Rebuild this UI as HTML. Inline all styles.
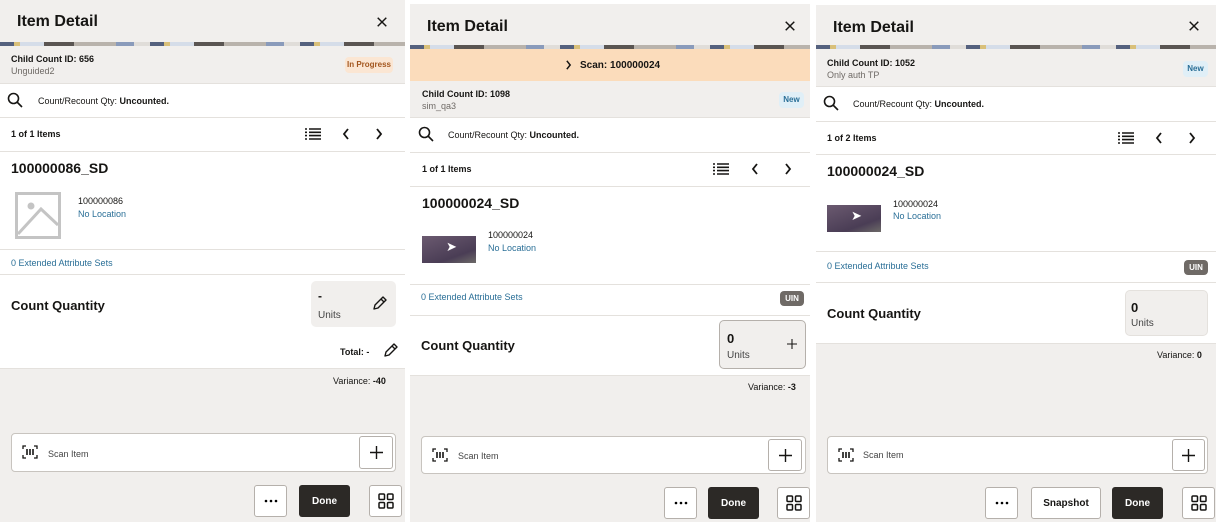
<!DOCTYPE html>
<html><head><meta charset="utf-8"><style>
*{margin:0;padding:0;box-sizing:border-box}
body{width:1216px;height:525px;background:#fff;font-family:"Liberation Sans",sans-serif;color:#161513;position:relative;overflow:hidden}
.p{position:absolute;top:0;height:522px;background:#fff;overflow:hidden}
.a{position:absolute}
.hd{background:#f1efed;left:0;right:0}
.title{font-size:16px;font-weight:bold}
.stripe{left:0;right:0;height:4px;background:repeating-linear-gradient(90deg,#55617e 0 14px,#d9c07a 14px 20px,#d5dde9 20px 44px,#5a5552 44px 74px,#b9b3ac 74px 116px,#8a9bbb 116px 134px,#e0ddd9 134px 150px)}
.sm{font-size:9px}
.b{font-weight:bold}
.sub{font-size:9px;color:#6f6a66}
.bdr{left:0;right:0;height:1px;background:#e4e1dd}
.badge{font-size:8px;font-weight:bold;border-radius:4px;text-align:center;line-height:16px}
.link{color:#2a6f97;font-size:9px}
.qbox{background:#f1efed;border-radius:5px}
.btn{border:1px solid #b5b0ab;border-radius:3px;background:#fff;text-align:center;font-size:10px;font-weight:bold;display:flex;align-items:center;justify-content:center}
.done{background:#2c2926;color:#fff;border-radius:3px;font-size:10px;font-weight:bold;display:flex;align-items:center;justify-content:center}
.scan{background:#fff;border:1px solid #c8c4bf;border-radius:4px}
.thumb{background:linear-gradient(160deg,#6b5a70,#4a3d55 70%,#6d6a68)}
</style></head><body>
<svg width="0" height="0" style="position:absolute">
<defs>
<symbol id="x" viewBox="0 0 14 14"><path d="M2 2l10 10M12 2L2 12" stroke="#161513" stroke-width="1.7"/></symbol>
<symbol id="srch" viewBox="0 0 16 16"><circle cx="6.5" cy="6.5" r="5" fill="none" stroke="#161513" stroke-width="1.6"/><path d="M10 10l5 5" stroke="#161513" stroke-width="1.6"/></symbol>
<symbol id="list" viewBox="0 0 16 12"><path d="M0 1h2M0 4.3h2M0 7.6h2M0 11h2M4 1h12M4 4.3h12M4 7.6h12M4 11h12" stroke="#161513" stroke-width="1.6"/></symbol>
<symbol id="lt" viewBox="0 0 8 12"><path d="M6 1L2 6l4 5" fill="none" stroke="#161513" stroke-width="1.8"/></symbol>
<symbol id="rt" viewBox="0 0 8 12"><path d="M2 1l4 5-4 5" fill="none" stroke="#161513" stroke-width="1.8"/></symbol>
<symbol id="pen" viewBox="0 0 16 16"><path d="M3 13l1-4 8-8 3 3-8 8z M10 3l3 3" fill="none" stroke="#161513" stroke-width="1.4" stroke-linejoin="round"/></symbol>
<symbol id="grid" viewBox="0 0 16 16"><rect x="1" y="1" width="5.5" height="5.5" rx="1" fill="none" stroke="#161513" stroke-width="1.5"/><rect x="9.5" y="1" width="5.5" height="5.5" rx="1" fill="none" stroke="#161513" stroke-width="1.5"/><rect x="1" y="9.5" width="5.5" height="5.5" rx="1" fill="none" stroke="#161513" stroke-width="1.5"/><rect x="9.5" y="9.5" width="5.5" height="5.5" rx="1" fill="none" stroke="#161513" stroke-width="1.5"/></symbol>
<symbol id="dots" viewBox="0 0 14 4"><circle cx="2" cy="2" r="1.3"/><circle cx="7" cy="2" r="1.3"/><circle cx="12" cy="2" r="1.3"/></symbol>
<symbol id="plus" viewBox="0 0 14 14"><path d="M7 0v14M0 7h14" stroke="#161513" stroke-width="1.5"/></symbol>
<symbol id="bc" viewBox="0 0 16 14"><path d="M1 4V1h3M12 1h3v3M15 10v3h-3M4 13H1v-3" fill="none" stroke="#161513" stroke-width="1.3"/><path d="M5 4v6M8 4v6M11 4v6" stroke="#161513" stroke-width="1.6"/></symbol>
</defs></svg>

<!-- Panel 1 -->
<div class="p" style="left:0;width:405px">
 <div class="a hd" style="top:0;height:42px"></div>
 <div class="a title" style="left:17px;top:13px">Item Detail</div>
 <svg class="a" style="left:376px;top:16px" width="12" height="12"><use href="#x"/></svg>
 <div class="a stripe" style="top:42px"></div>
 <div class="a hd" style="top:46px;height:37px"></div>
 <div class="a sm b" style="left:11px;top:54px">Child Count ID: 656</div>
 <div class="a sub" style="left:11px;top:66px">Unguided2</div>
 <div class="a badge" style="left:345px;top:57px;width:48px;background:#fbe6d3;color:#a3561e">In Progress</div>
 <div class="a bdr" style="top:83px"></div>
 <svg class="a" style="left:7px;top:92px" width="16" height="16"><use href="#srch"/></svg>
 <div class="a sm" style="left:38px;top:96px">Count/Recount Qty: <b>Uncounted.</b></div>
 <div class="a bdr" style="top:117px"></div>
 <div class="a sm b" style="left:11px;top:129px">1 of 1 Items</div>
 <svg class="a" style="left:305px;top:128px" width="16" height="12"><use href="#list"/></svg>
 <svg class="a" style="left:342px;top:128px" width="8" height="12"><use href="#lt"/></svg>
 <svg class="a" style="left:375px;top:128px" width="8" height="12"><use href="#rt"/></svg>
 <div class="a bdr" style="top:151px"></div>
 <div class="a b" style="left:11px;top:160px;font-size:14px">100000086_SD</div>
 <svg class="a" style="left:15px;top:192px" width="46" height="47" viewBox="0 0 46 47"><rect x="1.5" y="1.5" width="43" height="44" fill="none" stroke="#c4c4c4" stroke-width="3"/><circle cx="16" cy="14" r="3.5" fill="#c4c4c4"/><path d="M3 42L26 17l17 16" fill="none" stroke="#c4c4c4" stroke-width="3"/></svg>
 <div class="a sm" style="left:78px;top:196px">100000086</div>
 <div class="a link" style="left:78px;top:209px">No Location</div>
 <div class="a bdr" style="top:249px"></div>
 <div class="a link" style="left:11px;top:258px">0 Extended Attribute Sets</div>
 <div class="a bdr" style="top:274px"></div>
 <div class="a b" style="left:11px;top:298px;font-size:13px">Count Quantity</div>
 <div class="a qbox" style="left:311px;top:281px;width:85px;height:46px"></div>
 <div class="a b" style="left:318px;top:289px;font-size:12px">-</div>
 <div class="a" style="left:318px;top:310px;font-size:10px;color:#444">Units</div>
 <svg class="a" style="left:371px;top:296px" width="16" height="16"><use href="#pen"/></svg>
 <div class="a sm b" style="left:340px;top:347px">Total: -</div>
 <svg class="a" style="left:382px;top:343px" width="16" height="16"><use href="#pen"/></svg>
 <div class="a" style="left:0;right:0;top:368px;height:154px;background:#f1efed;border-top:1px solid #e4e1dd"></div>
 <div class="a sm" style="left:333px;top:376px">Variance: <b>-40</b></div>
 <div class="a scan" style="left:11px;top:433px;width:385px;height:39px"></div>
 <svg class="a" style="left:22px;top:445px" width="16" height="14"><use href="#bc"/></svg>
 <div class="a sm" style="left:48px;top:449px;color:#444">Scan Item</div>
 <div class="a btn" style="left:359px;top:436px;width:34px;height:33px"><svg width="13" height="13"><use href="#plus"/></svg></div>
 <div class="a btn" style="left:254px;top:485px;width:33px;height:32px"><svg width="14" height="4"><use href="#dots"/></svg></div>
 <div class="a done" style="left:299px;top:485px;width:51px;height:32px">Done</div>
 <div class="a btn" style="left:369px;top:485px;width:33px;height:32px"><svg width="16" height="16"><use href="#grid"/></svg></div>
</div>

<!-- Panel 2 -->
<div class="p" style="left:410px;width:400px">
 <div class="a hd" style="top:4px;height:41px"></div>
 <div class="a title" style="left:17px;top:18px">Item Detail</div>
 <svg class="a" style="left:374px;top:20px" width="12" height="12"><use href="#x"/></svg>
 <div class="a stripe" style="top:45px"></div>
 <div class="a" style="left:0;right:0;top:49px;height:32px;background:#fbdcbb"></div>
 <svg class="a" style="left:155px;top:60px" width="7" height="10"><use href="#rt"/></svg>
 <div class="a b" style="left:170px;top:60px;font-size:10px">Scan: 100000024</div>
 <div class="a hd" style="top:81px;height:36px"></div>
 <div class="a sm b" style="left:12px;top:89px">Child Count ID: 1098</div>
 <div class="a sub" style="left:12px;top:101px">sim_qa3</div>
 <div class="a badge" style="left:369px;top:92px;width:25px;background:#e0eff7;color:#2a6f97">New</div>
 <div class="a bdr" style="top:117px"></div>
 <svg class="a" style="left:8px;top:126px" width="16" height="16"><use href="#srch"/></svg>
 <div class="a sm" style="left:38px;top:130px">Count/Recount Qty: <b>Uncounted.</b></div>
 <div class="a bdr" style="top:152px"></div>
 <div class="a sm b" style="left:12px;top:164px">1 of 1 Items</div>
 <svg class="a" style="left:303px;top:163px" width="16" height="12"><use href="#list"/></svg>
 <svg class="a" style="left:341px;top:163px" width="8" height="12"><use href="#lt"/></svg>
 <svg class="a" style="left:374px;top:163px" width="8" height="12"><use href="#rt"/></svg>
 <div class="a bdr" style="top:186px"></div>
 <div class="a b" style="left:12px;top:195px;font-size:14px">100000024_SD</div>
 <div class="a thumb" style="left:12px;top:236px;width:54px;height:27px"></div>
 <div class="a" style="left:36px;top:239px;font-size:13px;color:#fff">➤</div>
 <div class="a sm" style="left:78px;top:230px">100000024</div>
 <div class="a link" style="left:78px;top:243px">No Location</div>
 <div class="a bdr" style="top:284px"></div>
 <div class="a link" style="left:11px;top:292px">0 Extended Attribute Sets</div>
 <div class="a badge" style="left:370px;top:291px;width:24px;background:#6f6a66;color:#fff;line-height:15px">UIN</div>
 <div class="a bdr" style="top:315px"></div>
 <div class="a b" style="left:11px;top:338px;font-size:13px">Count Quantity</div>
 <div class="a qbox" style="left:309px;top:320px;width:87px;height:49px;border:1px solid #b5b0ab"></div>
 <div class="a b" style="left:317px;top:331px;font-size:13px">0</div>
 <div class="a" style="left:317px;top:350px;font-size:10px;color:#444">Units</div>
 <svg class="a" style="left:377px;top:339px" width="10" height="10"><use href="#plus"/></svg>
 <div class="a" style="left:0;right:0;top:375px;height:147px;background:#f1efed;border-top:1px solid #e4e1dd"></div>
 <div class="a sm" style="left:338px;top:382px">Variance: <b>-3</b></div>
 <div class="a scan" style="left:11px;top:436px;width:385px;height:38px"></div>
 <svg class="a" style="left:22px;top:448px" width="16" height="14"><use href="#bc"/></svg>
 <div class="a sm" style="left:48px;top:451px;color:#444">Scan Item</div>
 <div class="a btn" style="left:358px;top:439px;width:34px;height:32px"><svg width="13" height="13"><use href="#plus"/></svg></div>
 <div class="a btn" style="left:254px;top:487px;width:33px;height:32px"><svg width="14" height="4"><use href="#dots"/></svg></div>
 <div class="a done" style="left:298px;top:487px;width:51px;height:32px">Done</div>
 <div class="a btn" style="left:367px;top:487px;width:33px;height:32px"><svg width="16" height="16"><use href="#grid"/></svg></div>
</div>

<!-- Panel 3 -->
<div class="p" style="left:816px;width:400px">
 <div class="a hd" style="top:5px;height:40px"></div>
 <div class="a title" style="left:17px;top:19px">Item Detail</div>
 <svg class="a" style="left:372px;top:20px" width="12" height="12"><use href="#x"/></svg>
 <div class="a stripe" style="top:45px"></div>
 <div class="a hd" style="top:49px;height:37px"></div>
 <div class="a sm b" style="left:11px;top:58px">Child Count ID: 1052</div>
 <div class="a sub" style="left:11px;top:70px">Only auth TP</div>
 <div class="a badge" style="left:367px;top:61px;width:25px;background:#e0eff7;color:#2a6f97">New</div>
 <div class="a bdr" style="top:86px"></div>
 <svg class="a" style="left:7px;top:95px" width="16" height="16"><use href="#srch"/></svg>
 <div class="a sm" style="left:37px;top:99px">Count/Recount Qty: <b>Uncounted.</b></div>
 <div class="a bdr" style="top:121px"></div>
 <div class="a sm b" style="left:11px;top:133px">1 of 2 Items</div>
 <svg class="a" style="left:302px;top:132px" width="16" height="12"><use href="#list"/></svg>
 <svg class="a" style="left:339px;top:132px" width="8" height="12"><use href="#lt"/></svg>
 <svg class="a" style="left:372px;top:132px" width="8" height="12"><use href="#rt"/></svg>
 <div class="a bdr" style="top:154px"></div>
 <div class="a b" style="left:11px;top:163px;font-size:14px">100000024_SD</div>
 <div class="a thumb" style="left:11px;top:205px;width:54px;height:27px"></div>
 <div class="a" style="left:35px;top:208px;font-size:13px;color:#fff">➤</div>
 <div class="a sm" style="left:77px;top:199px">100000024</div>
 <div class="a link" style="left:77px;top:211px">No Location</div>
 <div class="a bdr" style="top:251px"></div>
 <div class="a link" style="left:11px;top:261px">0 Extended Attribute Sets</div>
 <div class="a badge" style="left:368px;top:260px;width:24px;background:#6f6a66;color:#fff;line-height:15px">UIN</div>
 <div class="a bdr" style="top:282px"></div>
 <div class="a b" style="left:11px;top:306px;font-size:13px">Count Quantity</div>
 <div class="a qbox" style="left:309px;top:290px;width:83px;height:46px;border:1px solid #e4e1dd"></div>
 <div class="a b" style="left:315px;top:300px;font-size:13px">0</div>
 <div class="a" style="left:315px;top:318px;font-size:10px;color:#444">Units</div>
 <div class="a" style="left:0;right:0;top:343px;height:179px;background:#f1efed;border-top:1px solid #e4e1dd"></div>
 <div class="a sm" style="left:341px;top:350px">Variance: <b>0</b></div>
 <div class="a scan" style="left:11px;top:436px;width:381px;height:38px"></div>
 <svg class="a" style="left:22px;top:448px" width="16" height="14"><use href="#bc"/></svg>
 <div class="a sm" style="left:47px;top:450px;color:#444">Scan Item</div>
 <div class="a btn" style="left:356px;top:439px;width:33px;height:32px"><svg width="13" height="13"><use href="#plus"/></svg></div>
 <div class="a btn" style="left:169px;top:487px;width:33px;height:32px"><svg width="14" height="4"><use href="#dots"/></svg></div>
 <div class="a btn" style="left:215px;top:487px;width:70px;height:32px">Snapshot</div>
 <div class="a done" style="left:296px;top:487px;width:51px;height:32px">Done</div>
 <div class="a btn" style="left:366px;top:487px;width:33px;height:32px"><svg width="16" height="16"><use href="#grid"/></svg></div>
</div>
</body></html>
